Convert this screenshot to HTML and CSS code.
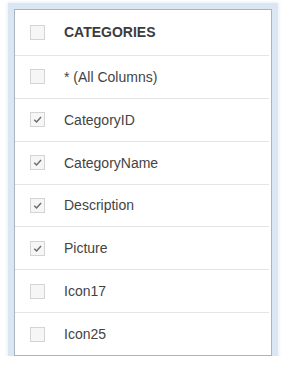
FILE: index.html
```html
<!DOCTYPE html>
<html lang="en">
<head>
  <meta charset="UTF-8">
  <title>Columns</title>
  <link rel="stylesheet" href="styles.css">
</head>
<body>
  <div class="panel">
    <div class="row header">
      <span class="box"></span>
      <span class="label">CATEGORIES</span>
    </div>
    <div class="row">
      <span class="box"></span>
      <span class="label">* (All Columns)</span>
    </div>
    <div class="row">
      <span class="box checked"><svg viewBox="0 0 14 14"><path d="M3.5 7.2 L6 9.6 L10.8 4.4"/></svg></span>
      <span class="label">CategoryID</span>
    </div>
    <div class="row">
      <span class="box checked"><svg viewBox="0 0 14 14"><path d="M3.5 7.2 L6 9.6 L10.8 4.4"/></svg></span>
      <span class="label">CategoryName</span>
    </div>
    <div class="row">
      <span class="box checked"><svg viewBox="0 0 14 14"><path d="M3.5 7.2 L6 9.6 L10.8 4.4"/></svg></span>
      <span class="label">Description</span>
    </div>
    <div class="row">
      <span class="box checked"><svg viewBox="0 0 14 14"><path d="M3.5 7.2 L6 9.6 L10.8 4.4"/></svg></span>
      <span class="label">Picture</span>
    </div>
    <div class="row">
      <span class="box"></span>
      <span class="label">Icon17</span>
    </div>
    <div class="row">
      <span class="box"></span>
      <span class="label">Icon25</span>
    </div>
  </div>
</body>
</html>
```

FILE: styles.css
```css
body {
  margin: 0;
  padding: 9px 0 0 14px;
  background: #fff;
  font-family: "Liberation Sans", Arial, sans-serif;
}
.panel {
  width: 256px;
  height: 345px;
  background: #fff;
  border: 1px solid #a9b4c0;
  box-shadow: 0 0 0 6px #dae6f1, 0 0 4px 7px #e9f0f7;
  display: flex;
  flex-direction: column;
}
.row {
  height: 42px;
  display: flex;
  align-items: center;
  border-bottom: 1px solid #e4e4e4;
  margin-right: 2px;
  font-size: 14px;
  color: #444;
}
.row:last-child {
  border-bottom: none;
}
.header {
  height: 45px;
  font-weight: bold;
  color: #3c3c3c;
}
.box {
  width: 13px;
  height: 13px;
  margin-left: 15px;
  margin-right: 19px;
  border: 1px solid #d4d4d4;
  background: #f6f6f6;
  display: flex;
}
.box svg {
  width: 13px;
  height: 13px;
  fill: none;
  stroke: #6c6c6c;
  stroke-width: 1.6;
}
```
